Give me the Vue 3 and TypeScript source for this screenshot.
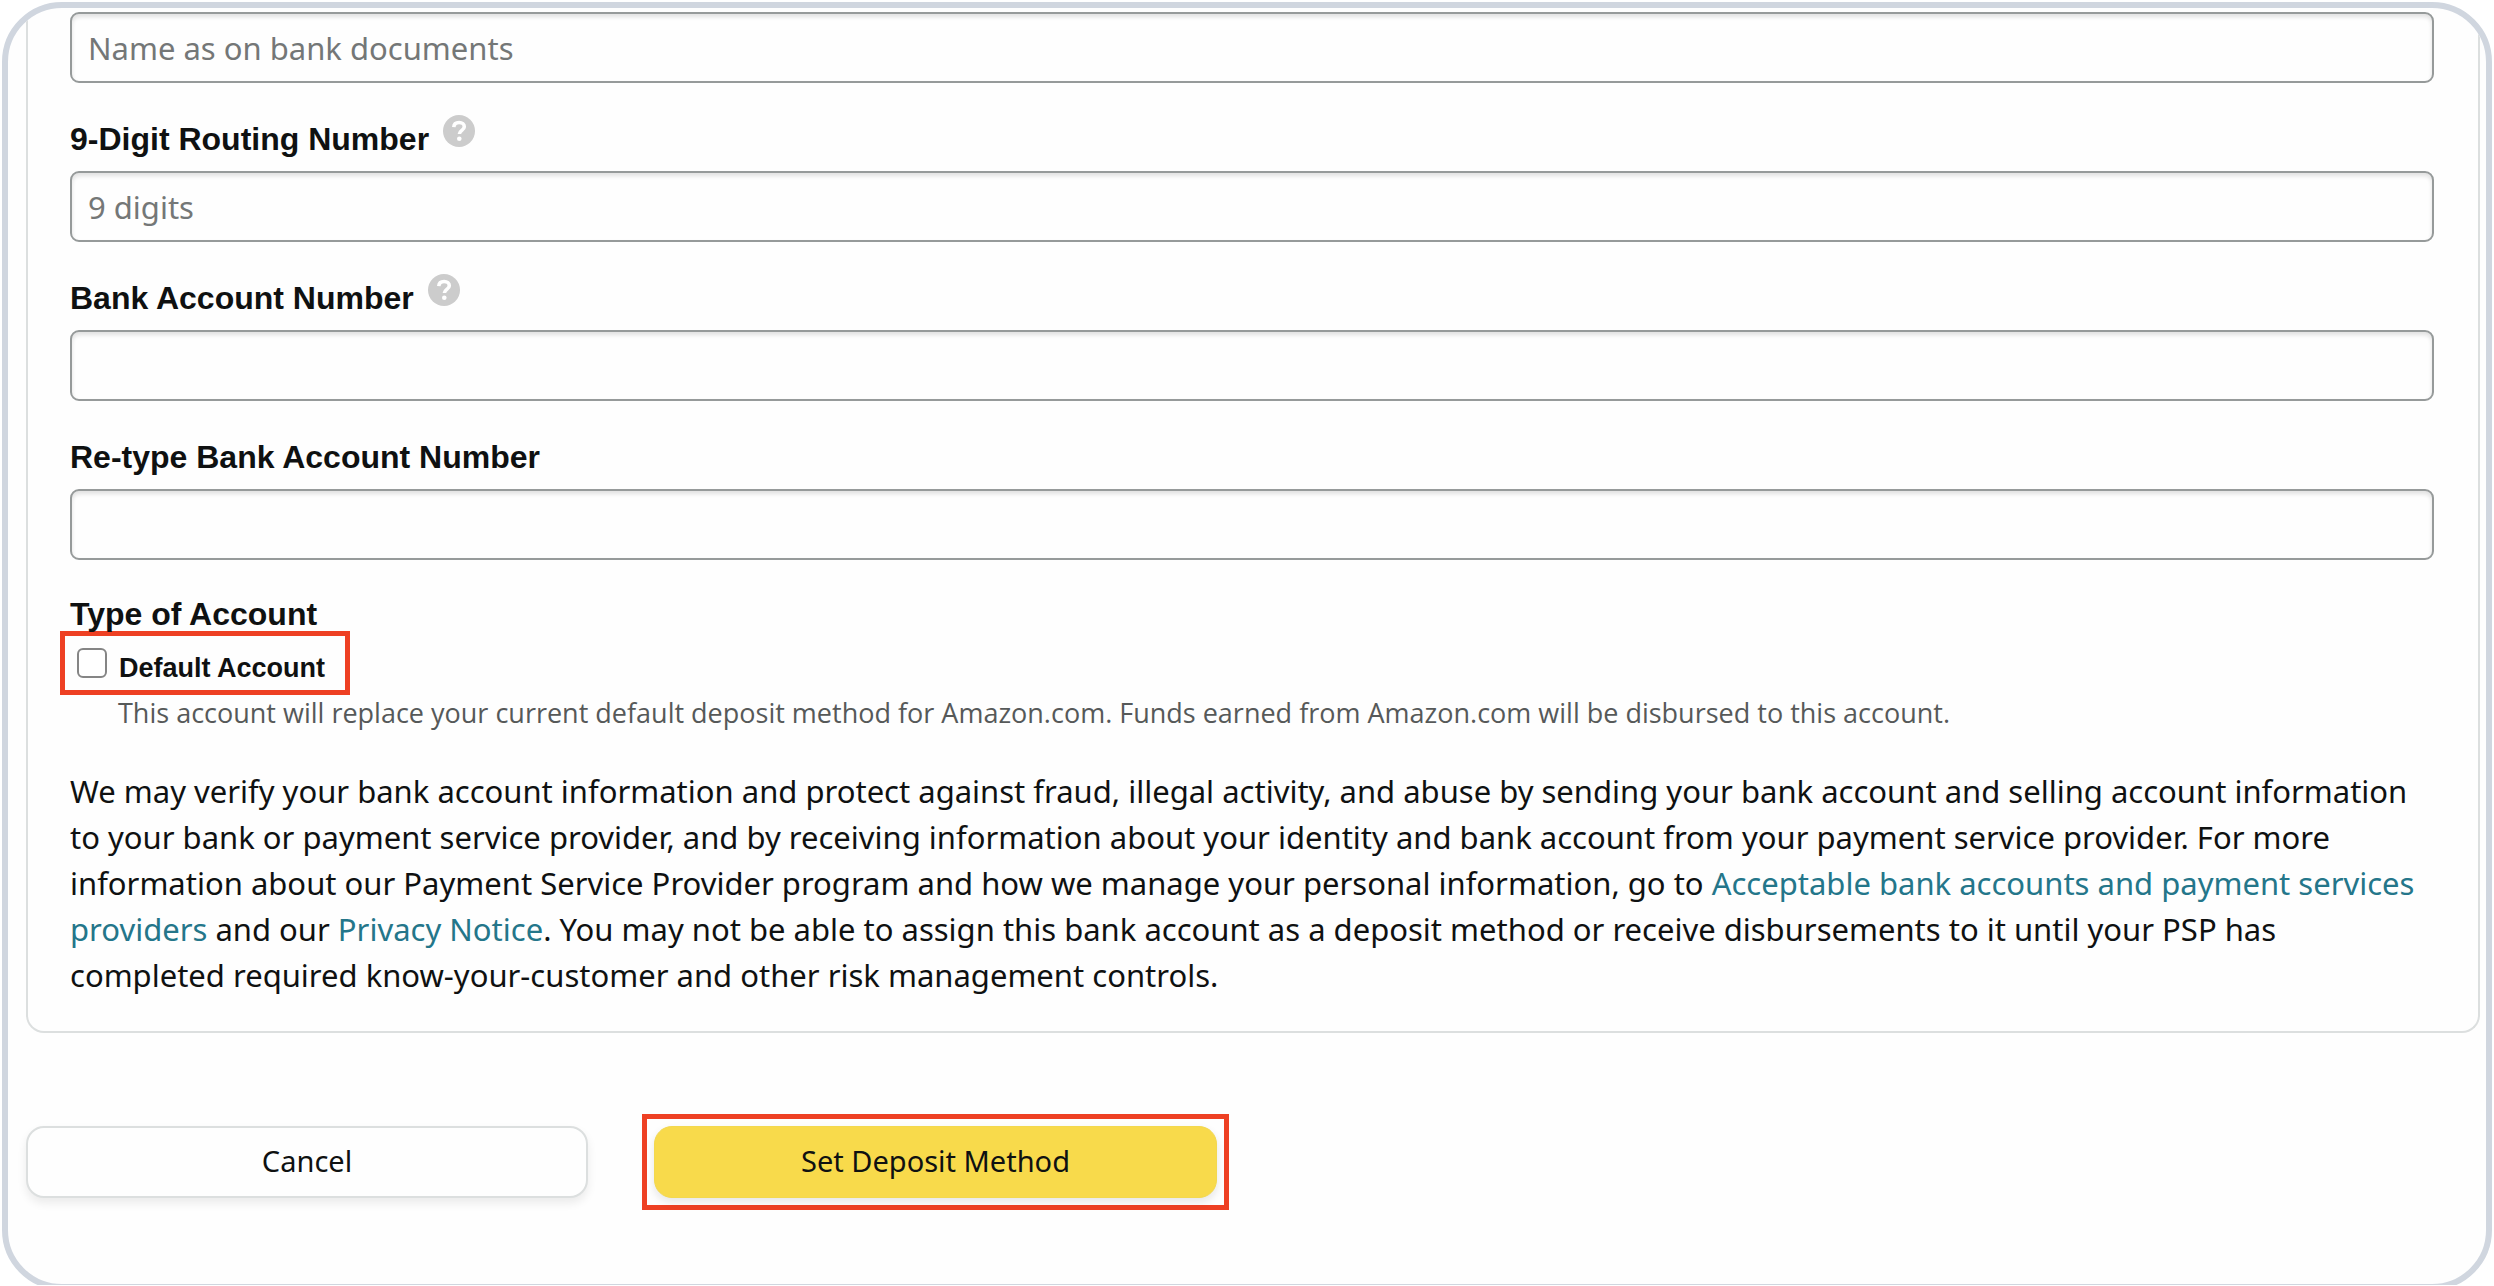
<script setup lang="ts">
import { reactive, ref } from 'vue'

interface Field {
  id: string
  label?: string
  placeholder?: string
  help?: boolean
}

const fields: Field[] = [
  { id: 'holder', placeholder: 'Name as on bank documents' },
  { id: 'routing', label: '9-Digit Routing Number', placeholder: '9 digits', help: true },
  { id: 'account', label: 'Bank Account Number', help: true },
  { id: 'account-confirm', label: 'Re-type Bank Account Number' },
]

const values = reactive<Record<string, string>>({
  holder: '',
  routing: '',
  account: '',
  'account-confirm': '',
})
const isDefault = ref(false)
</script>

<template>
  <main class="page">
    <form class="frame" @submit.prevent>
      <section class="card">
        <div v-for="field in fields" :key="field.id">
          <div v-if="field.label" class="label-row">
            <label class="heading" :for="field.id">{{ field.label }}</label>
            <button v-if="field.help" class="help" type="button" :aria-label="`Help: ${field.label}`">
              <svg viewBox="0 0 32 32" width="32" height="32" aria-hidden="true">
                <circle cx="16" cy="16" r="16" fill="#cccccc" />
                <path
                  d="M10.8 12.2C11 8.9 13.2 7.5 16.1 7.5c3 0 5.2 1.700 5.200 4.200 0 3.700-4.900 3.700-4.900 7.300"
                  fill="none"
                  stroke="#ffffff"
                  stroke-width="3.600"
                />
                <circle cx="16.300" cy="23.800" r="2.300" fill="#ffffff" />
              </svg>
            </button>
          </div>
          <input
            :id="field.id"
            v-model="values[field.id]"
            class="text-input"
            type="text"
            :placeholder="field.placeholder"
            :aria-label="field.label ?? field.placeholder"
          />
        </div>

        <div class="account-type">
          <div class="heading">Type of Account</div>
          <label class="default-option highlight">
            <input v-model="isDefault" class="checkbox" type="checkbox" />
            <span>Default Account</span>
          </label>
          <p class="hint">
            This account will replace your current default deposit method for Amazon.com. Funds earned from Amazon.com
            will be disbursed to this account.
          </p>
        </div>

        <p class="notice">
          We may verify your bank account information and protect against fraud, illegal activity, and abuse by sending
          your bank account and selling account information to your bank or payment service provider, and by receiving
          information about your identity and bank account from your payment service provider. For more information
          about our Payment Service Provider program and how we manage your personal information, go to
          <a href="#accounts">Acceptable bank accounts and payment services providers</a> and our
          <a href="#privacy">Privacy Notice</a>. You may not be able to assign this bank account as a deposit method or
          receive disbursements to it until your PSP has completed required know-your-customer and other risk
          management controls.
        </p>
      </section>

      <div class="actions">
        <button class="btn cancel" type="button">Cancel</button>
        <div class="submit-wrap highlight">
          <button class="btn submit" type="submit">Set Deposit Method</button>
        </div>
      </div>
    </form>
  </main>
</template>

<style>
body {
  background: #ffffff;
}
</style>

<style scoped>
.page {
  box-sizing: border-box;
  height: calc(100vh - 1px);
  padding: 2px 2px 0;
  overflow: hidden;
  color: #0f1111;
  font-family: "Noto Sans", "Open Sans", sans-serif;
}

.frame {
  box-sizing: border-box;
  padding-bottom: 74px;
  border: 6px solid #d0d6df;
  border-radius: 60px;
  background: #fefefe;
  overflow: hidden;
}

.card {
  margin: 0 6px 0 18px;
  padding: 4px 44px 33px 42px;
  border: 2px solid #dcdfdf;
  border-top: 0;
  border-radius: 0 0 18px 18px;
}

.label-row {
  display: flex;
  align-items: flex-start;
  gap: 14px;
  padding: 36px 0 12px;
}

.heading {
  font: bold 32px/40px "Liberation Sans", Arial, sans-serif;
}

.help {
  height: 32px;
  margin: -4px 0 0;
  padding: 0;
  border: 0;
  background: none;
}

.help svg {
  display: block;
}

.text-input {
  display: block;
  box-sizing: border-box;
  width: 100%;
  height: 71px;
  padding: 0 16px;
  border: 2px solid #969a9a;
  border-radius: 9px;
  background: #fefefe;
  box-shadow: inset 0 3px 4px rgba(15, 17, 17, 0.12);
  color: inherit;
  font: 31px "Noto Sans", "Open Sans", sans-serif;
}

.text-input::placeholder {
  color: #747777;
  opacity: 1;
}

.account-type {
  padding-top: 34px;
}

.highlight {
  border: 5px solid #ee4023;
}

.default-option {
  display: flex;
  align-items: flex-start;
  gap: 12px;
  width: fit-content;
  margin: -3px 0 0 -10px;
  padding: 12px 20px 2px 12px;
  font: bold 27px/40px "Liberation Sans", Arial, sans-serif;
}

.checkbox {
  box-sizing: border-box;
  width: 30px;
  height: 30px;
  margin: 0;
  border: 2px solid #858585;
  border-radius: 6px;
  background: #ffffff;
  appearance: none;
}

.checkbox:checked {
  background: #2f7f8f;
}

.hint {
  margin: 0 0 0 48px;
  color: #565959;
  font-family: "Open Sans", "Noto Sans", sans-serif;
  font-size: 27px;
  line-height: 36px;
}

.notice {
  margin: 37px 0 0;
  font-size: 31px;
  line-height: 46px;
}

.notice a {
  color: #24768a;
  text-decoration: none;
}

.actions {
  display: flex;
  align-items: center;
  gap: 54px;
  margin: 81px 6px 0 18px;
}

.btn {
  box-sizing: border-box;
  height: 72px;
  padding: 0 16px 3px;
  border-radius: 18px;
  color: #0f1111;
  font: 29px "Noto Sans", "Open Sans", sans-serif;
}

.cancel {
  flex: 0 1 562px;
  border: 2px solid #dcdfdf;
  background: #fefefe;
  box-shadow: 0 5px 10px rgba(15, 17, 17, 0.08);
}

.submit-wrap {
  box-sizing: border-box;
  flex: 0 1 587px;
  padding: 7px;
}

.submit {
  display: block;
  width: 100%;
  border: 1px solid #f3d84e;
  background: #f8da4b;
  box-shadow: 0 4px 8px rgba(15, 17, 17, 0.1);
}
</style>
